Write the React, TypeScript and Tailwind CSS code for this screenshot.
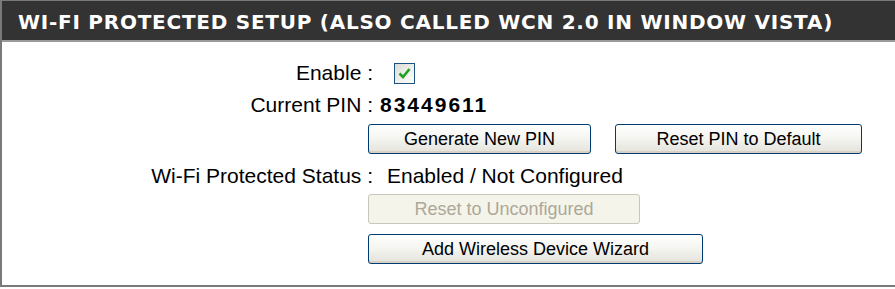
import React from 'react';

const xpButton =
  'h-[30px] rounded-[3px] border border-[#003c74] bg-gradient-to-b from-white via-[#f4f4f0] to-[#e3e2da] text-[18px] text-black flex items-center justify-center shadow-[inset_0_-2px_0_#d6d0c5]';

const Row = ({ label, children }: { label: string; children: React.ReactNode }) => (
  <div className="flex items-center h-[22px]">
    <div className="w-[371px] shrink-0 text-right whitespace-pre">{label}</div>
    <div className="flex items-center">{children}</div>
  </div>
);

const App = () => {
  return (
    <div className="w-[895px] h-[289px] bg-white font-['Liberation_Sans',Arial,sans-serif] text-[21px] text-black">
      <div className="h-[287px] border-l-2 border-b-2 border-t border-[#7a7a7a]">
        <div className="h-[41px] bg-[#333333] border-b-2 border-[#9a9a9a] flex items-center pl-[16px] pt-[3px]">
          <h2 className="font-['DejaVu_Sans',sans-serif] font-bold text-[20px] tracking-[0.75px] text-white leading-none">
            WI-FI PROTECTED SETUP (ALSO CALLED WCN 2.0 IN WINDOW VISTA)
          </h2>
        </div>

        <div className="flex flex-col pt-[20px]">
          <Row label="Enable :">
            <div className="ml-[21px] w-[21px] h-[21px] border border-[#1c5180] bg-gradient-to-br from-[#dcdcd7] to-white flex items-center justify-center">
              <svg width="13" height="12" viewBox="0 0 13 12">
                <path d="M1.5 6.5 L5 10 L11.5 2" fill="none" stroke="#21a121" strokeWidth="2.6" />
              </svg>
            </div>
          </Row>

          <div className="mt-[10px]">
            <Row label="Current PIN :">
              <span className="ml-[7px] font-bold tracking-[2px]">83449611</span>
            </Row>
          </div>

          <div className="mt-[8px] ml-[366px] flex gap-[24px]">
            <button className={`${xpButton} w-[223px]`}>Generate New PIN</button>
            <button className={`${xpButton} w-[247px]`}>Reset PIN to Default</button>
          </div>

          <div className="mt-[11px]">
            <Row label="Wi-Fi Protected Status :">
              <span className="ml-[14px]">Enabled / Not Configured</span>
            </Row>
          </div>

          <div className="mt-[7px] ml-[366px]">
            <button
              disabled
              className="h-[30px] w-[272px] rounded-[3px] border border-[#c9c7ba] bg-[#f5f4ea] text-[18px] text-[#aca899] flex items-center justify-center"
            >
              Reset to Unconfigured
            </button>
          </div>

          <div className="mt-[10px] ml-[366px]">
            <button className={`${xpButton} w-[335px]`}>Add Wireless Device Wizard</button>
          </div>
        </div>
      </div>
    </div>
  );
};

export default App;
